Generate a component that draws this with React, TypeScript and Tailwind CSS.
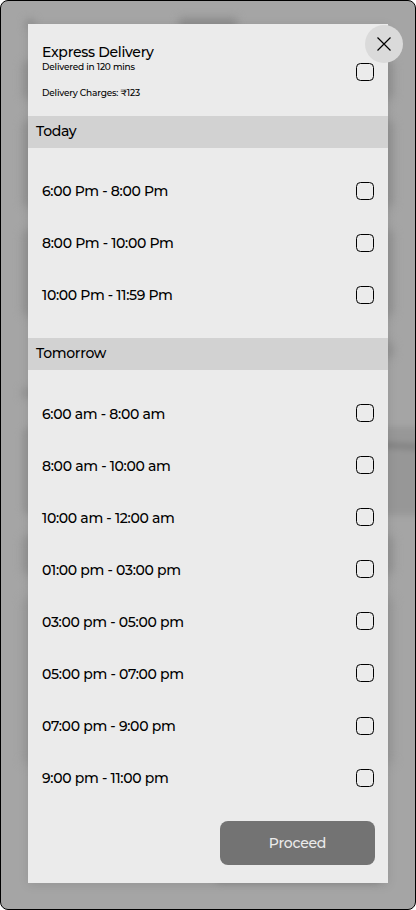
import { useState } from "react";

const today = ["6:00 Pm - 8:00 Pm", "8:00 Pm - 10:00 Pm", "10:00 Pm - 11:59 Pm"];
const tomorrow = [
  "6:00 am - 8:00 am",
  "8:00 am - 10:00 am",
  "10:00 am - 12:00 am",
  "01:00 pm - 03:00 pm",
  "03:00 pm - 05:00 pm",
  "05:00 pm - 07:00 pm",
  "07:00 pm - 9:00 pm",
  "9:00 pm - 11:00 pm",
];

function Check({ on, toggle, label }: { on: boolean; toggle: () => void; label: string }) {
  return (
    <button
      role="checkbox"
      aria-checked={on}
      aria-label={label}
      onClick={toggle}
      className={`size-[18px] shrink-0 rounded-[4.5px] border border-black ${on ? "bg-[#707070]" : "bg-transparent"}`}
    />
  );
}

function Slots({ title, slots, chosen, choose }: { title: string; slots: string[]; chosen: string; choose: (s: string) => void }) {
  return (
    <section>
      <h2 className="flex h-8 items-center bg-[#d2d2d2] pb-px pl-2">{title}</h2>
      <ul className="pt-[17px]">
        {slots.map((slot) => (
          <li key={slot} className="flex h-[52.1px] items-center justify-between px-3.5">
            <span className="pt-[2px]">{slot}</span>
            <Check on={chosen === slot} toggle={() => choose(slot)} label={slot} />
          </li>
        ))}
      </ul>
    </section>
  );
}

/* Blurred page cards that show behind the dialog. */
function Backdrop() {
  return (
    <div className="absolute inset-0 flex flex-col overflow-hidden rounded-[7px] px-[21px] pt-[17px]">
      <div className="flex h-3 items-center justify-between pr-[157px] pl-1 blur-[4px]">
        <div className="size-2 bg-[#888]" />
        <div className="h-3 w-[58px] bg-[#8c8c8c]" />
      </div>
      <div className="mt-[30px] h-10 rounded-lg bg-[#949494] blur-[4px]" />
      <div className="mt-5 h-[88px] rounded-lg bg-[#949494] blur-[4px]" />
      <div className="mt-[21px] h-[88px] rounded-lg bg-[#949494] blur-[4px]" />
      <div className="mt-6 ml-auto h-[18px] w-48 rounded-lg bg-[#939393] blur-[4px]" />
      <div className="mt-[30px] h-2 w-12 bg-[#909090] blur-[4px]" />
      <div className="mt-[30px] flex h-[88px] w-[410px] justify-end rounded-lg bg-[#979797] pt-[17px] blur-[3px]">
        <div className="h-1 w-16 rotate-3 bg-[#787878]" />
      </div>
      <div className="mt-5 h-10 rounded-lg bg-[#949494] blur-[4px]" />
      <div className="mt-[22px] h-[168px] rounded-lg bg-[#9a9a9a] blur-[5px]" />
      <div className="mt-[94px] mr-3 ml-auto h-6 w-[168px] shrink-0 rounded-lg bg-[#8a8a8a] blur-[3px]" />
    </div>
  );
}

export default function App() {
  const [chosen, setChosen] = useState("");
  const choose = (s: string) => setChosen(s === chosen ? "" : s);
  return (
    <div className="h-[910px] w-[416px] bg-white font-[Montserrat,Inter,sans-serif] text-[14px] font-medium tracking-[-0.3px] text-black">
      <main className="relative h-full rounded-[8px] border border-black bg-[#a5a5a5] pt-[23px] pl-[27px]">
        <Backdrop />
        <div className="relative flex h-[858.5px] w-[360px] flex-col bg-[#ebebeb] shadow-[0_2px_10px_rgba(0,0,0,0.1)]">
          <header className="flex h-[91.5px] justify-between px-3.5">
            <div className="pt-[18px]">
              <h1 className="leading-5 tracking-[-0.28px]">Express Delivery</h1>
              <div className="flex flex-col gap-4 text-[9px] leading-[10px] tracking-[-0.18px]">
                <p>Delivered in 120 mins</p>
                <p>Delivery Charges: ₹123</p>
              </div>
            </div>
            <div className="pt-[39px]">
              <Check on={chosen === "Express"} toggle={() => choose("Express")} label="Express" />
            </div>
          </header>
          <div className="flex flex-col gap-[17.2px]">
            <Slots title="Today" slots={today} chosen={chosen} choose={choose} />
            <Slots title="Tomorrow" slots={tomorrow} chosen={chosen} choose={choose} />
          </div>
          <footer className="mt-auto flex justify-end pr-[13px] pb-[17.5px]">
            <button className="h-11 w-[155px] rounded-[8px] bg-[#737373] tracking-[-0.2px] text-[#ebebeb]">Proceed</button>
          </footer>
          <button aria-label="Close" className="absolute top-px -right-[15px] flex size-[38px] items-center justify-center rounded-full bg-[#dadada]">
            <svg width="14" height="14" viewBox="0 0 14 14" fill="none" stroke="#000" strokeWidth="1.2" className="mr-px mb-px">
              <path d="M.5.5l13 13M13.5.5l-13 13" />
            </svg>
          </button>
        </div>
      </main>
    </div>
  );
}
